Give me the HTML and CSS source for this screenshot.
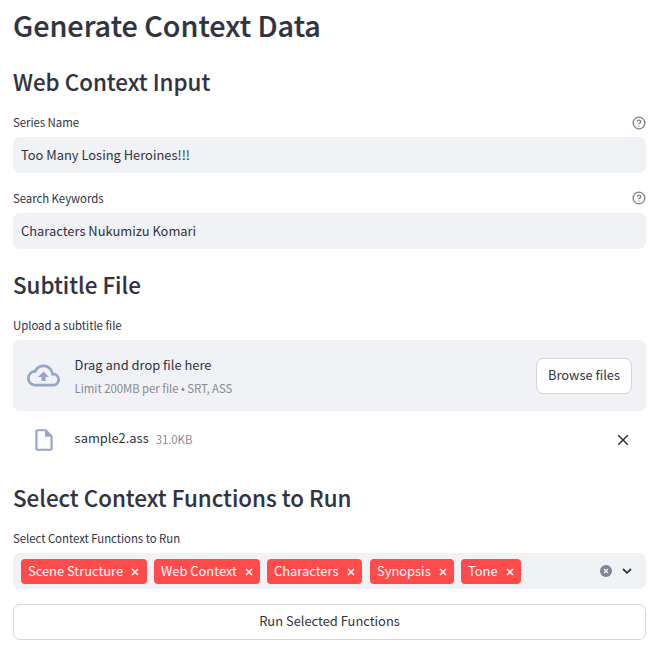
FILE: index.html
```html
<!DOCTYPE html>
<html lang="en">
<head>
<meta charset="utf-8">
<title>Generate Context Data</title>
<link rel="stylesheet" href="styles.css">
</head>
<body>
<main class="page">
  <h1><span>Generate Context Data</span></h1>

  <h2 class="web"><span>Web Context Input</span></h2>
  <div class="label first"><span>Series Name</span>
    <svg class="help" viewBox="0 0 24 24"><circle cx="12" cy="12" r="10"/><path d="M9.09 9a3 3 0 0 1 5.83 1c0 2-3 3-3 3M12 17h.01"/></svg>
  </div>
  <div class="input"><span>Too Many Losing Heroines!!!</span></div>
  <div class="label"><span>Search Keywords</span>
    <svg class="help" viewBox="0 0 24 24"><circle cx="12" cy="12" r="10"/><path d="M9.09 9a3 3 0 0 1 5.83 1c0 2-3 3-3 3M12 17h.01"/></svg>
  </div>
  <div class="input"><span>Characters Nukumizu Komari</span></div>

  <h2 class="subtitle"><span>Subtitle File</span></h2>
  <div class="label"><span>Upload a subtitle file</span></div>
  <section class="dropzone">
    <svg class="cloud" viewBox="0 0 24 24"><path d="M19.35 10.04A7.49 7.49 0 0 0 12 4C9.11 4 6.6 5.64 5.35 8.04A5.994 5.994 0 0 0 0 14c0 3.31 2.69 6 6 6h13c2.76 0 5-2.24 5-5 0-2.64-2.05-4.78-4.65-4.96zM19 18H6c-2.21 0-4-1.79-4-4 0-2.05 1.53-3.76 3.56-3.97l1.07-.11.5-.95A5.469 5.469 0 0 1 12 6c2.62 0 4.88 1.86 5.39 4.43l.3 1.5 1.53.11A2.98 2.98 0 0 1 22 15c0 1.65-1.35 3-3 3zM8 13h2.55v3h2.9v-3H16l-4-4z"/></svg>
    <div class="instructions">
      <span class="drag">Drag and drop file here</span>
      <span class="limit">Limit 200MB per file • SRT, ASS</span>
    </div>
    <button class="browse">Browse files</button>
  </section>
  <div class="file">
    <svg class="doc" viewBox="0 0 24 24"><path d="M14 2H6c-1.1 0-1.99.9-1.99 2L4 20c0 1.1.89 2 1.99 2H18c1.1 0 2-.9 2-2V8l-6-6zM6 20V4h7v5h5v11H6z"/></svg>
    <span class="name">sample2.ass</span>
    <span class="size">31.0KB</span>
    <svg class="remove" viewBox="0 0 12 12"><path d="M1.2 1.2l9.6 9.6M10.8 1.2l-9.6 9.6"/></svg>
  </div>

  <h2 class="select-title"><span>Select Context Functions to Run</span></h2>
  <div class="label"><span>Select Context Functions to Run</span></div>
  <div class="select">
    <span class="tag t1"><span>Scene Structure</span><svg viewBox="0 0 8 8"><path d="M1 1l6 6M7 1l-6 6"/></svg></span>
    <span class="tag t2"><span>Web Context</span><svg viewBox="0 0 8 8"><path d="M1 1l6 6M7 1l-6 6"/></svg></span>
    <span class="tag t3"><span>Characters</span><svg viewBox="0 0 8 8"><path d="M1 1l6 6M7 1l-6 6"/></svg></span>
    <span class="tag t4"><span>Synopsis</span><svg viewBox="0 0 8 8"><path d="M1 1l6 6M7 1l-6 6"/></svg></span>
    <span class="tag t5"><span>Tone</span><svg viewBox="0 0 8 8"><path d="M1 1l6 6M7 1l-6 6"/></svg></span>
    <svg class="clear" viewBox="0 0 12 12"><circle cx="6" cy="6" r="6"/><path d="M4 4l4 4M8 4l-4 4"/></svg>
    <svg class="chevron" viewBox="0 0 10 6"><path d="M1 1l4 3.8L9 1"/></svg>
  </div>
  <button class="run">Run Selected Functions</button>
</main>
</body>
</html>
```

FILE: styles.css
```css
* { box-sizing: border-box; }
body {
  margin: 0;
  background: #fff;
  color: #31333f;
  font-family: "Noto Sans CJK JP", "Noto Sans", sans-serif;
  font-size: 12.9px;
  line-height: 20px;
}
svg { display: block; flex: none; }
.page { width: 633px; margin-left: 13px; display: flex; flex-direction: column; }
h1, h2 { margin: 0; font-weight: 500; white-space: nowrap; }
h1 { height: 40px; margin-top: 5px; font-size: 28.75px; line-height: 40px; -webkit-text-stroke: 0.2px #31333f; }
h2 { height: 32px; font-size: 22.35px; line-height: 32px; -webkit-text-stroke: 0.12px #31333f; }
.web { margin-top: 20px; }
.subtitle { margin-top: 19px; }
.select-title { margin-top: 26px; }
.label {
  height: 18px;
  margin-top: 16px;
  margin-bottom: 6px;
  display: flex;
  align-items: center;
  justify-content: space-between;
  font-size: 11.4px;
  letter-spacing: -0.04px;
  line-height: 18px;
}
.first { margin-top: 17px; margin-bottom: 5px; }
.first span { padding-bottom: 2px; }
.help { width: 14px; height: 14px; fill: none; stroke: #7f818a; stroke-width: 2.3; stroke-linecap: round; stroke-linejoin: round; }
.input { height: 36px; padding: 0 8px; border-radius: 7px; background: #f0f2f6; line-height: 36px; }
.dropzone {
  height: 71px;
  padding: 0 14px;
  display: flex;
  align-items: center;
  border-radius: 7px;
  background: #f0f2f6;
}
.cloud { width: 33px; height: 33px; fill: #98a5c4; }
.instructions { flex: 1; margin-left: 14.6px; padding-top: 1px; display: flex; flex-direction: column; gap: 3px; }
.limit { font-size: 11.4px; letter-spacing: -0.05px; color: #888a94; }
button {
  height: 36px;
  padding: 0 0 2px;
  border: 1px solid #d5d6d9;
  border-radius: 7px;
  background: #fff;
  color: inherit;
  font: inherit;
}
.browse { width: 96px; }
.file { height: 30px; margin-top: 14px; padding: 0 17px 0 18px; display: flex; align-items: center; }
.doc { width: 26px; height: 26px; fill: #98a5c4; }
.name { margin-left: 17.6px; padding-bottom: 4px; }
.size { margin-left: 7px; padding-bottom: 3px; font-size: 11.4px; letter-spacing: -0.05px; color: #888a94; }
.remove { width: 12px; height: 12px; margin-left: auto; fill: none; stroke: #31333f; stroke-width: 1.5; }
.select {
  height: 36px;
  padding: 0 14px 0 8px;
  display: flex;
  align-items: center;
  gap: 7px;
  border-radius: 7px;
  background: #f0f2f6;
}
.tag {
  height: 25px;
  padding: 0 7px;
  display: flex;
  align-items: center;
  justify-content: space-between;
  border-radius: 4px;
  background: #ff4b4b;
  color: #fff;
}
.tag svg { width: 8px; height: 8px; margin-top: 1px; fill: none; stroke: #fff; stroke-width: 1.5; }
.t1 { width: 126px; padding-right: 8px; }
.t2 { width: 106px; }
.t3 { width: 95px; }
.t4 { width: 84px; margin-left: 1px; }
.t5 { width: 60px; }
.clear { width: 12px; height: 12px; margin-left: auto; margin-bottom: 1px; fill: #808495; }
.clear path { stroke: #f0f2f6; stroke-width: 1.5; }
.chevron { width: 10px; height: 6px; margin-left: 3px; margin-bottom: 1px; fill: none; stroke: #31333f; stroke-width: 1.8; }
.run { margin-top: 15px; }
```
